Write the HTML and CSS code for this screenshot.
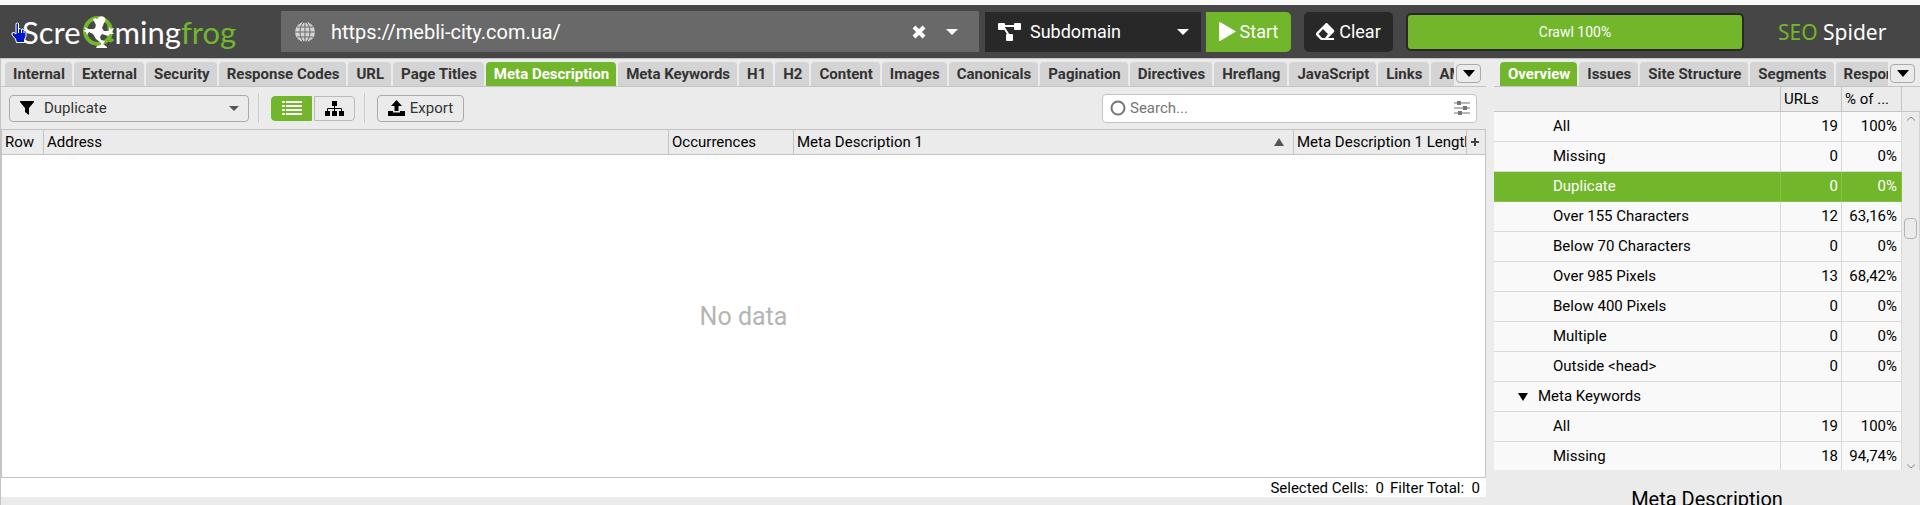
FILE: index.html
```html
<!DOCTYPE html>
<html lang="en">
<head>
    <meta charset="UTF-8">
    <meta name="viewport" content="width=device-width, initial-scale=1.0">
    <title>Screaming Frog SEO Spider</title>
    <link rel="stylesheet" href="styles.css">
</head>
<body>
    <header class="topbar">
        <div class="logo">
            <svg class="pointer" width="16" height="22" viewBox="0 0 16 22">
                <path d="M5 1.5Q6.500 .5 7.500 1.500V7L9 6.500L10 7.500L12 7L13 8.500L15 8.500V14L13.500 18V20.500H5.500L4.500 17L1 13V11L3 10.500L5 12Z" fill="#0018c8" stroke="#fff" stroke-width="1"/>
                <path d="M7.500 7V11M10.500 8V11M13 9V11" stroke="#fff" stroke-width="1"/>
            </svg>
            <span>Scre</span>
            <svg class="frog" width="32" height="34" viewBox="0 0 32 34">
                <circle cx="16" cy="16" r="13" fill="none" stroke="#72b62b" stroke-width="4"/>
                <path d="M27 9V24Q28 28 31 24" fill="none" stroke="#72b62b" stroke-width="3"/>
                <path d="M11 5Q12 2 15 4Q18 0 22 2Q25 5 22 8L20 13L22 16L27 16L27 12L29 14L32 13L30 17L32 19L28 19L26 21L20 19L18 22L19 25L23 26L21 29L25 32L25 33H14L15 31L19 30L19 28L14 24L11 19L7 17L5 20L4 17L1 16L4 15L2 12L7 14L12 14Q15 11 13 8Z" fill="#fff"/>
            </svg>
            <span>ming<span class="green">frog</span></span>
        </div>
        <div class="url-box">
            <svg width="20" height="20" viewBox="0 0 20 20">
                <circle cx="10" cy="10" r="10" fill="#d4d4d4"/>
                <path d="M10 0V20M0 10H20M2 5H18M2 15H18" stroke="#696969" fill="none"/>
                <ellipse cx="10" cy="10" rx="5" ry="10" stroke="#696969" fill="none"/>
            </svg>
            <input type="text" class="url-input" aria-label="URL to spider" value="https://mebli-city.com.ua/">
            <button class="plain" aria-label="Clear URL">
                <svg width="14" height="14" viewBox="0 0 14 14"><path d="M2 2L12 12M12 2L2 12" stroke="#fff" stroke-width="4"/></svg>
            </button>
            <button class="plain" aria-label="Recent URLs">
                <svg width="12" height="6" viewBox="0 0 12 6"><path d="M0 0H12L6 6Z" fill="#fff"/></svg>
            </button>
        </div>
        <div class="mode-box">
            <svg width="24" height="19" viewBox="0 0 24 19">
                <path d="M4 4H20M5 4L12 15" stroke="#fff" stroke-width="2"/>
                <rect x="0" y="1" width="7" height="7" rx="1" fill="#fff"/>
                <rect x="16" y="1" width="7" height="7" rx="1" fill="#fff"/>
                <rect x="8" y="12" width="7" height="7" rx="1" fill="#fff"/>
            </svg>
            <select class="mode-select" aria-label="Crawl mode">
                <option>Subdomain</option>
            </select>
            <svg width="12" height="6" viewBox="0 0 12 6"><path d="M0 0H12L6 6Z" fill="#fff"/></svg>
        </div>
        <button class="start-btn">
            <svg width="17" height="19" viewBox="0 0 17 19"><path d="M0 1Q0 0 1 0L17 9.500L1 19Q0 19 0 18Z" fill="#fff"/></svg>
            Start
        </button>
        <button class="clear-btn">
            <svg width="19" height="17" viewBox="0 0 19 17">
                <path d="M11 0L18 7Q18.500 8 18 9L12 15H18V17H5L0 12Q-.5 11 0 10L10 0ZM7 6L2.500 11L6 15H9L12 11Z" fill="#fff" fill-rule="evenodd"/>
            </svg>
            Clear
        </button>
        <div class="progress">Crawl 100%</div>
        <div class="product"><span class="green">SEO</span> Spider</div>
    </header>

    <main class="workspace">
        <section class="results">
            <nav class="tabs">
                <div class="tab-list">
                    <button class="tab">Internal</button>
                    <button class="tab">External</button>
                    <button class="tab">Security</button>
                    <button class="tab">Response Codes</button>
                    <button class="tab">URL</button>
                    <button class="tab">Page Titles</button>
                    <button class="tab active">Meta Description</button>
                    <button class="tab">Meta Keywords</button>
                    <button class="tab">H1</button>
                    <button class="tab">H2</button>
                    <button class="tab">Content</button>
                    <button class="tab">Images</button>
                    <button class="tab">Canonicals</button>
                    <button class="tab">Pagination</button>
                    <button class="tab">Directives</button>
                    <button class="tab">Hreflang</button>
                    <button class="tab">JavaScript</button>
                    <button class="tab">Links</button>
                    <button class="tab">AMP</button>
                </div>
                <button class="more" aria-label="More tabs">
                    <svg width="12" height="7" viewBox="0 0 12 7"><path d="M0 0H12L6 7Z"/></svg>
                </button>
            </nav>

            <div class="toolbar">
                <div class="filter-box">
                    <svg width="14" height="14" viewBox="0 0 14 14"><path d="M0 0H14V1L9 7V14L5 11V7L0 1Z"/></svg>
                    <select class="filter-select" aria-label="Filter">
                        <option>Duplicate</option>
                    </select>
                    <svg width="10" height="5" viewBox="0 0 10 5"><path d="M0 0H10L5 5Z" fill="#555"/></svg>
                </div>
                <span class="separator"></span>
                <div class="view-toggle">
                    <button class="view-btn active" aria-label="List view">
                        <svg width="20" height="15" viewBox="0 0 20 15"><path d="M0 1H3M4 1H20M0 5H3M4 5H20M0 9H3M4 9H20M0 13H3M4 13H20" stroke="#fff" stroke-width="2"/></svg>
                    </button>
                    <button class="view-btn" aria-label="Tree view">
                        <svg width="19" height="15" viewBox="0 0 19 15">
                            <path d="M7 0H12V5H7ZM0 10H5V15H0ZM7 10H12V15H7ZM14 10H19V15H14Z"/>
                            <path d="M9.500 5V10M2.500 10V7.500H16.500V10" fill="none" stroke="#000"/>
                        </svg>
                    </button>
                </div>
                <span class="separator"></span>
                <button class="export-btn">
                    <svg width="17" height="16" viewBox="0 0 17 16"><path d="M8.500 0L14 6H10.500V11H6.500V6H3ZM0 11H5V12.500H12V11H17V16H0Z"/></svg>
                    Export
                </button>
                <div class="search-box">
                    <svg width="16" height="16" viewBox="0 0 16 16"><circle cx="8" cy="8" r="6.500" fill="none" stroke="#757575" stroke-width="2"/></svg>
                    <input type="text" class="search-input" aria-label="Search" placeholder="Search...">
                    <button class="plain" aria-label="Search options">
                        <svg width="16" height="14" viewBox="0 0 16 14">
                            <path d="M0 2H16M0 7H16M0 12H16" stroke="#757575"/>
                            <path d="M3 0H7V4H3ZM9 5H13V9H9ZM4 10H8V14H4Z" fill="#757575"/>
                        </svg>
                    </button>
                </div>
            </div>

            <div class="grid-area">
                <table class="grid">
                    <thead>
                        <tr>
                            <th class="col-row">Row</th>
                            <th class="col-address">Address</th>
                            <th class="col-occurrences">Occurrences</th>
                            <th class="col-meta">
                                <div class="sorted">
                                    Meta Description 1
                                    <svg width="10" height="8" viewBox="0 0 10 8"><path d="M5 0L10 8H0Z" fill="#555"/></svg>
                                </div>
                            </th>
                            <th class="col-length">Meta Description 1 Length</th>
                            <th class="col-add">
                                <button class="plain" aria-label="Add column">
                                    <svg width="8" height="8" viewBox="0 0 8 8"><path d="M4 0V8M0 4H8" stroke="#444" stroke-width="2"/></svg>
                                </button>
                            </th>
                        </tr>
                    </thead>
                </table>
                <div class="empty">No data</div>
            </div>
            <div class="status">
                <span>Selected Cells:&nbsp; 0</span>
                <span>Filter Total:&nbsp; 0</span>
            </div>
        </section>

        <aside class="overview">
            <nav class="tabs">
                <div class="tab-list">
                    <button class="tab active">Overview</button>
                    <button class="tab">Issues</button>
                    <button class="tab">Site Structure</button>
                    <button class="tab">Segments</button>
                    <button class="tab">Response Times</button>
                </div>
                <button class="more" aria-label="More tabs">
                    <svg width="12" height="7" viewBox="0 0 12 7"><path d="M0 0H12L6 7Z"/></svg>
                </button>
            </nav>
            <div class="tree-area">
                <table class="tree">
                    <thead>
                        <tr><th></th><th class="col-urls">URLs</th><th class="col-percent">% of ...</th></tr>
                    </thead>
                    <tbody>
                        <tr><td>All</td><td>19</td><td>100%</td></tr>
                        <tr><td>Missing</td><td>0</td><td>0%</td></tr>
                        <tr class="selected"><td>Duplicate</td><td>0</td><td>0%</td></tr>
                        <tr><td>Over 155 Characters</td><td>12</td><td>63,16%</td></tr>
                        <tr><td>Below 70 Characters</td><td>0</td><td>0%</td></tr>
                        <tr><td>Over 985 Pixels</td><td>13</td><td>68,42%</td></tr>
                        <tr><td>Below 400 Pixels</td><td>0</td><td>0%</td></tr>
                        <tr><td>Multiple</td><td>0</td><td>0%</td></tr>
                        <tr><td>Outside &lt;head&gt;</td><td>0</td><td>0%</td></tr>
                        <tr class="group">
                            <td><svg width="10" height="8" viewBox="0 0 10 8"><path d="M0 0H10L5 8Z"/></svg>Meta Keywords</td>
                            <td></td>
                            <td></td>
                        </tr>
                        <tr><td>All</td><td>19</td><td>100%</td></tr>
                        <tr><td>Missing</td><td>18</td><td>94,74%</td></tr>
                    </tbody>
                </table>
                <div class="scrollbar">
                    <svg width="10" height="5" viewBox="0 0 10 5"><path d="M1 4.500L5 1L9 4.500" fill="none" stroke="#888"/></svg>
                    <span class="track-above"></span>
                    <span class="thumb"></span>
                    <span class="track-below"></span>
                    <svg width="10" height="5" viewBox="0 0 10 5"><path d="M1 .5L5 4L9 .5" fill="none" stroke="#888"/></svg>
                </div>
            </div>
            <h2 class="chart-title">Meta Description</h2>
        </aside>
    </main>
</body>
</html>
```
FILE: styles.css
```css
* {
    box-sizing: border-box;
}
body {
    display: flex;
    flex-direction: column;
    height: 100vh;
    margin: 0;
    padding-top: 5px;
    overflow: hidden;
    background-color: #f9f9f9;
    color: #000;
    font-family: Roboto, sans-serif;
    font-size: 15px;
}
button, input, select {
    margin: 0;
    padding: 0;
    border: none;
    background: none;
    font: inherit;
    color: inherit;
}
select {
    appearance: none;
}
svg {
    display: block;
    flex: none;
}
button {
    display: flex;
    align-items: center;
    justify-content: center;
    cursor: pointer;
}
.green {
    color: #72b62b;
}

/* top bar */
.topbar {
    display: flex;
    align-items: center;
    height: 53px;
    flex: none;
    background-color: #464646;
    color: #fff;
    font-size: 20px;
}
.logo {
    position: relative;
    display: flex;
    align-items: center;
    width: 281px;
    padding-left: 22px;
    font-family: Lato, sans-serif;
    font-size: 31px;
    line-height: 40px;
}
.pointer {
    position: absolute;
    left: 11px;
    top: 10px;
}
.frog {
    margin: 0 1px;
}
.url-box {
    display: flex;
    align-items: center;
    flex: 1;
    height: 41px;
    padding: 0 21px 0 14px;
    background-color: #696969;
}
.url-input {
    flex: 1;
    padding: 0 16px;
    outline: none;
}
.url-box .plain + .plain {
    margin-left: 20px;
}
.mode-box {
    display: flex;
    align-items: center;
    width: 216px;
    height: 40px;
    margin: 0 5px 0 6px;
    padding: 0 12px 0 13px;
    background-color: #282828;
    font-size: 18px;
}
.mode-select {
    flex: 1;
    padding-left: 8px;
}
.start-btn, .clear-btn {
    gap: 4px;
    height: 40px;
    width: 85px;
    border-radius: 0 5px 5px 0;
    background-color: #72b62b;
    font-size: 18px;
}
.clear-btn {
    width: 89px;
    margin: 0 13px;
    border-radius: 5px;
    background-color: #282828;
}
.progress {
    display: flex;
    align-items: center;
    justify-content: center;
    width: 338px;
    height: 38px;
    border: 2px solid #282828;
    border-radius: 5px;
    background-color: #72b62b;
    font-size: 14px;
}
.product {
    width: 176px;
    padding-left: 34px;
    font-family: "Noto Sans", sans-serif;
    font-size: 21px;
}

/* panels */
.workspace {
    display: grid;
    grid-template-columns: minmax(0, 1fr) 426px;
    grid-template-rows: minmax(0, 1fr);
    gap: 8px;
    flex: 1;
    min-height: 0;
    border: 1px solid #c4c4c4;
    border-width: 1px 0 0 1px;
    background-color: #ebebeb;
}
.results, .overview {
    display: flex;
    flex-direction: column;
    min-width: 0;
    min-height: 0;
}
.tabs {
    display: flex;
    align-items: flex-end;
    flex: none;
    height: 28px;
    padding: 0 5px 0 6px;
    border-bottom: 1px solid #c4c4c4;
}
.tab-list {
    display: flex;
    gap: 2px;
    flex: 1;
    overflow: hidden;
}
.tab {
    flex: none;
    height: 24px;
    padding: 0 7px 0 8px;
    border-radius: 4px 4px 0 0;
    background-color: #d4d4d4;
    color: #333;
    font-weight: bold;
    white-space: nowrap;
}
.results .tabs {
    padding-left: 4px;
}
.tab.active {
    background-color: #72b62b;
    color: #fff;
}
.more {
    width: 25px;
    height: 19px;
    margin: 0 0 3px 2px;
    border: 1px solid #aaa;
    border-radius: 4px;
}

/* toolbar */
.toolbar {
    display: flex;
    align-items: center;
    flex: none;
    height: 42px;
    padding: 0 9px 0 8px;
    color: #333;
}
.filter-box {
    display: flex;
    align-items: center;
    width: 240px;
    height: 27px;
    padding: 0 9px 0 10px;
    border: 1px solid #aaa;
    border-radius: 4px;
}
.filter-select {
    flex: 1;
    padding-left: 10px;
}
.separator {
    width: 1px;
    height: 30px;
    margin: 0 12px 0 9px;
    background-color: #ccc;
}
.view-toggle {
    display: flex;
    gap: 2px;
}
.view-btn {
    width: 41px;
    height: 25px;
    border: 1px solid #bbb;
    border-radius: 0 4px 4px 0;
}
.view-btn.active {
    border-color: #72b62b;
    border-radius: 4px 0 0 4px;
    background-color: #72b62b;
}
.export-btn {
    gap: 5px;
    width: 87px;
    height: 27px;
    border: 1px solid #aaa;
    border-radius: 4px;
}
.search-box {
    display: flex;
    align-items: center;
    width: 375px;
    height: 29px;
    margin-left: auto;
    padding: 0 6px 0 7px;
    border: 1px solid #c4c4c4;
    border-radius: 4px;
    background-color: #fff;
}
.search-input {
    flex: 1;
    padding: 0 4px;
    outline: none;
}
.search-input::placeholder {
    color: #757575;
}

/* results grid */
.grid-area {
    display: flex;
    flex-direction: column;
    flex: 1;
    border: 1px solid #c4c4c4;
    background-color: #fff;
}
.grid, .tree {
    width: 100%;
    border-collapse: separate;
    border-spacing: 0;
    table-layout: fixed;
}
.grid th {
    height: 25px;
    padding: 0 3px;
    border: 1px solid #c4c4c4;
    border-width: 0 1px 1px 0;
    background-color: #ebebeb;
    font-weight: normal;
    text-align: left;
    white-space: nowrap;
    overflow: hidden;
}
.grid .col-add {
    border-right: none;
    padding: 0 4px;
}
.col-row {
    width: 42px;
}
.col-occurrences {
    width: 125px;
}
.col-meta {
    width: 500px;
}
.col-length {
    width: 173px;
}
.grid .col-length {
    padding-right: 0;
}
.col-add {
    width: 18px;
}
.sorted {
    display: flex;
    align-items: center;
    justify-content: space-between;
    padding-right: 6px;
}
.empty {
    display: flex;
    align-items: center;
    justify-content: center;
    flex: 1;
    color: #b4b4b4;
    font-size: 25px;
}
.status {
    display: flex;
    align-items: center;
    justify-content: flex-end;
    gap: 6px;
    flex: none;
    height: 19px;
    margin-bottom: 8px;
    padding-right: 6px;
    background-color: #fff;
}

/* overview tree */
.tree-area {
    display: grid;
    grid-template-columns: minmax(0, 1fr) 18px;
    flex: 1;
    min-height: 0;
    overflow: hidden;
}
.tree th {
    height: 25px;
    padding: 0 3px;
    border: 1px solid #c4c4c4;
    border-width: 0 1px 1px 0;
    font-weight: normal;
    text-align: left;
}
.tree td {
    height: 30px;
    padding: 0 4px 1px;
    border: 1px solid #d9d9d9;
    border-width: 0 1px 1px 0;
    background-color: #f9f9f9;
    text-align: right;
}
.tree td:first-child {
    padding-left: 59px;
    text-align: left;
}
.tree td:nth-child(2) {
    padding-right: 3px;
}
.tree .selected td {
    border-color: #83c043;
    background-color: #72b62b;
    color: #fff;
}
.tree .group td:first-child {
    padding-left: 24px;
}
.group svg {
    display: inline-block;
    margin-right: 10px;
}
.col-urls {
    width: 61px;
}
.col-percent {
    width: 60px;
}
.scrollbar {
    display: flex;
    flex-direction: column;
    align-items: center;
    min-height: 0;
    margin-top: 24px;
    padding: 4px 0 3px;
    border-top: 1px solid #c4c4c4;
    border-right: 1px solid #d4d4d4;
}
.track-above {
    flex: 3;
}
.thumb {
    width: 13px;
    height: 21px;
    border: 1px solid #b4b4b4;
    border-radius: 4px;
}
.track-below {
    flex: 7;
}
.chart-title {
    flex: none;
    height: 35px;
    margin: 0;
    padding-top: 17px;
    overflow: hidden;
    font-size: 20px;
    font-weight: normal;
    text-align: center;
}
```
